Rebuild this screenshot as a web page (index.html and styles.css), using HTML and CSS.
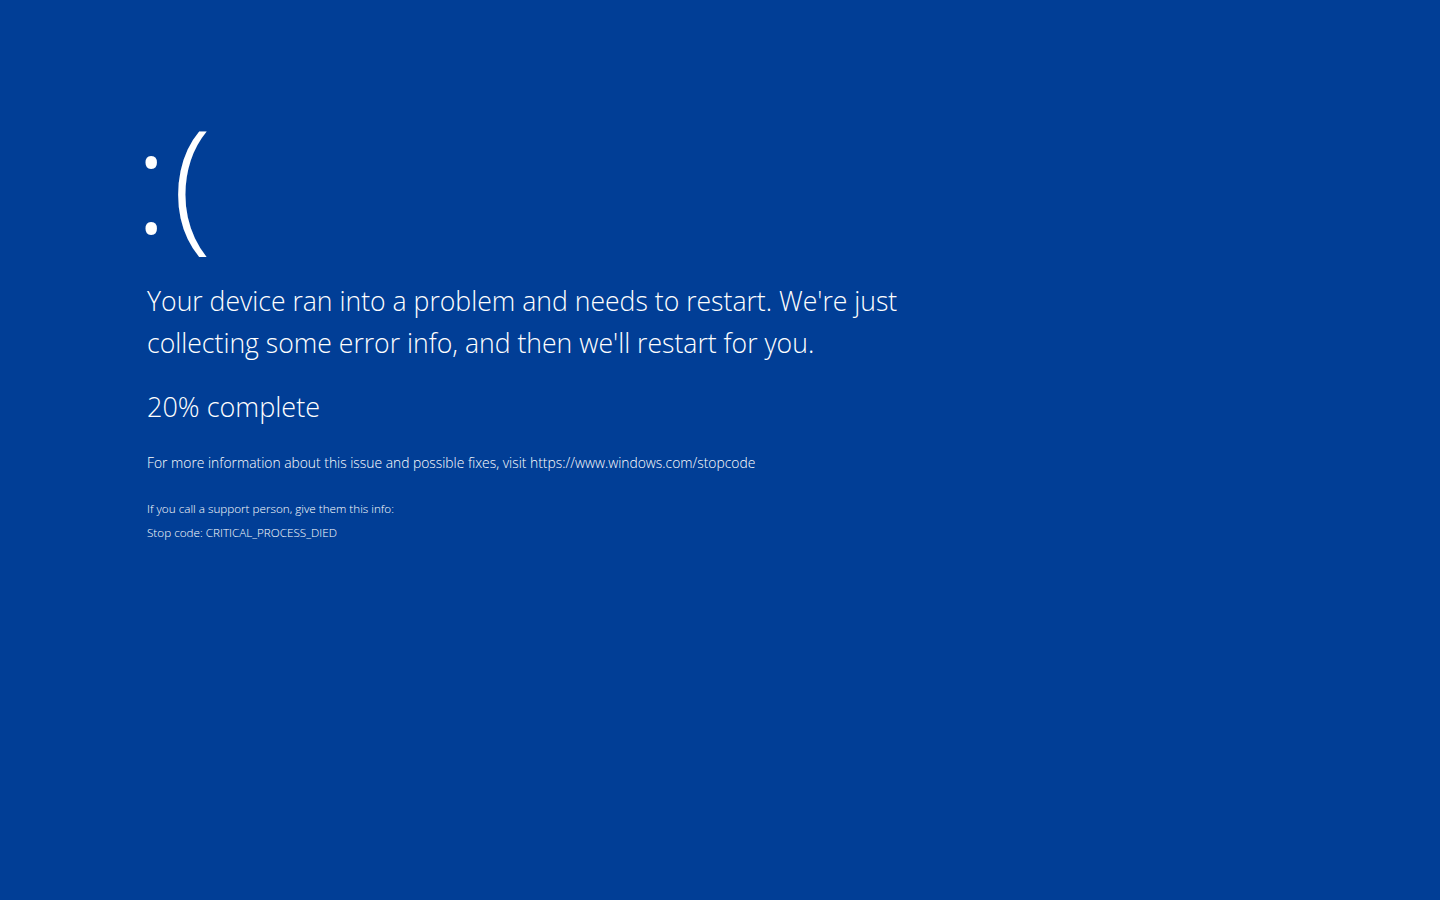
FILE: index.html
```html
<!DOCTYPE html>
<html lang="en">
<head>
  <meta charset="UTF-8" />
  <meta name="viewport" content="width=device-width, initial-scale=1.0"/>
  <title>Stop</title>
  <link rel="stylesheet" href="styles.css">
</head>
<body>
<div class="screen">
  <div class="face">:(</div>
  <p class="message">Your device ran into a problem and needs to restart. We're just<br>collecting some error info, and then we'll restart for you.</p>
  <p class="progress">20% complete</p>
  <p class="info">For more information about this issue and possible fixes, visit https://www.windows.com/stopcode</p>
  <p class="support">If you call a support person, give them this info:</p>
  <p class="code">Stop code: CRITICAL_PROCESS_DIED</p>
</div>
</body>
</html>
```

FILE: styles.css
```css
* { margin: 0; padding: 0; box-sizing: border-box; }
body {
  background: #013e96;
  color: white;
  font-family: "Open Sans", "Noto Sans", sans-serif;
  font-weight: 300;
  height: 100vh;
  overflow: hidden;
}
.screen { padding: 88px 0 0 147px; }
.face {
  font-size: 144px;
  line-height: 180px;
  margin-left: -13px;
  letter-spacing: 4px;
}
.message {
  font-size: 26.6px;
  line-height: 42px;
  margin-top: 12px;
}
.progress { font-size: 27px; line-height: 42px; margin-top: 22px; }
.info { font-size: 13.85px; line-height: 20px; margin-top: 25px; }
.support { font-size: 11.7px; line-height: 16px; margin-top: 27px; }
.code { font-size: 11.7px; line-height: 16px; margin-top: 8px; }
```
